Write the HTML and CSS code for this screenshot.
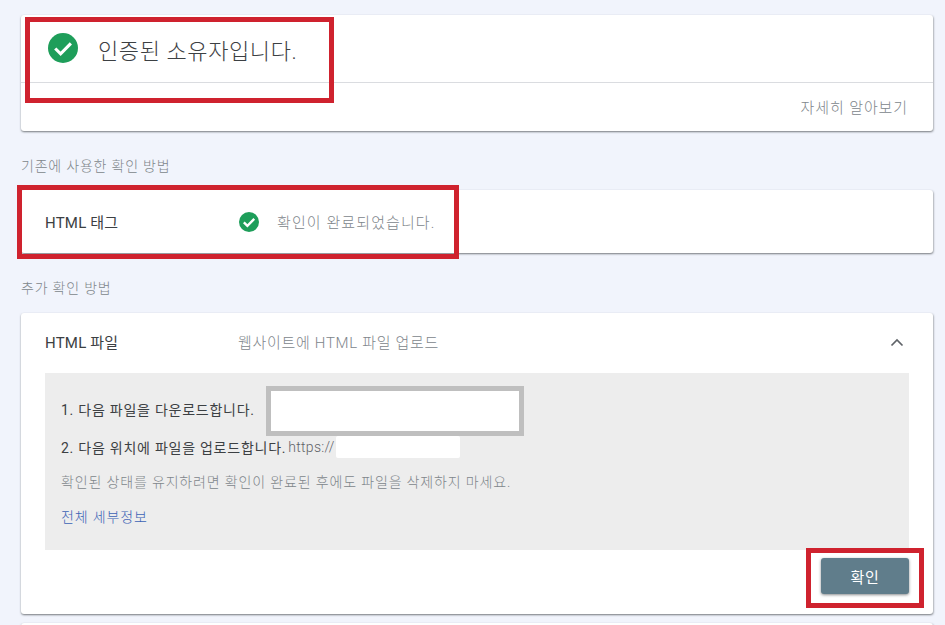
FILE: index.html
```html
<!DOCTYPE html>
<html lang="ko">
<head>
<meta charset="utf-8">
<title>소유권 확인</title>
<link rel="stylesheet" href="styles.css">
</head>
<body>
<main class="page">
  <section class="card owner-card">
    <div class="owner-head">
      <svg class="check check-lg" viewBox="0 0 24 24" aria-hidden="true"><circle cx="12" cy="12" r="12" fill="#1e9e5a"/><path d="M5.8 12.4l4.3 4.3 8.2-8.4" fill="none" stroke="#fff" stroke-width="2.5"/></svg>
      <h1 class="owner-title">인증된 소유자입니다.</h1>
    </div>
    <div class="owner-foot"><a class="more">자세히 알아보기</a></div>
  </section>

  <h2 class="section-label label-first">기존에 사용한 확인 방법</h2>
  <section class="card method-row">
    <div class="method-name">HTML 태그</div>
    <div class="method-status">
      <svg class="check check-sm" viewBox="0 0 24 24" aria-hidden="true"><circle cx="12" cy="12" r="12" fill="#1e9e5a"/><path d="M5.8 12.4l4.3 4.3 8.2-8.4" fill="none" stroke="#fff" stroke-width="2.8"/></svg>
      <span class="muted">확인이 완료되었습니다.</span>
    </div>
  </section>

  <h2 class="section-label label-second">추가 확인 방법</h2>
  <section class="card file-card">
    <div class="file-head">
      <div class="method-name">HTML 파일</div>
      <div class="file-desc muted">웹사이트에 HTML 파일 업로드</div>
      <svg class="chevron" viewBox="0 0 14 9" aria-hidden="true"><path d="M1.5 7.5L7 2l5.5 5.5" fill="none" stroke="#5f6368" stroke-width="1.7"/></svg>
    </div>
    <div class="panel">
      <div class="step step-one"><span class="step-text">1. 다음 파일을 다운로드합니다.</span><span class="redact-box"></span></div>
      <div class="step step-two"><span class="step-text">2. 다음 위치에 파일을 업로드합니다.</span><span class="url">https://</span><span class="redact-blob"></span></div>
      <p class="note">확인된 상태를 유지하려면 확인이 완료된 후에도 파일을 삭제하지 마세요.</p>
      <a class="details">전체 세부정보</a>
    </div>
    <div class="actions"><button class="confirm" type="button">확인</button></div>
  </section>
  <div class="card next-card"></div>
</main>
<div class="mark mark-owner"></div>
<div class="mark mark-tag"></div>
<div class="mark mark-button"></div>
</body>
</html>
```
FILE: styles.css
```css
* { box-sizing: border-box; }
html, body { margin: 0; height: 100%; }
body {
  position: relative;
  overflow: hidden;
  background: #f1f4fc;
  font-family: Roboto, "Noto Sans CJK KR", sans-serif;
  color: #202124;
}
.page { width: 912px; margin-left: 21px; padding-top: 15px; }
.card {
  background: #fff;
  border-radius: 3px;
  box-shadow: 0 1px 2px rgba(60,64,67,.55), 1px 1px 2px rgba(60,64,67,.2);
}
.owner-card { height: 116px; }
.owner-head {
  display: flex;
  align-items: center;
  height: 68px;
  padding-left: 27px;
  border-bottom: 1px solid #dadce0;
}
.check { display: block; flex: none; }
.check-lg { width: 30px; height: 30px; margin-top: -1px; }
.owner-title {
  margin: 7px 0 0 20px;
  font-size: 22px;
  font-weight: 300;
  line-height: 28px;
  color: #3c4043;
  letter-spacing: .6px;
}
.owner-foot {
  display: flex;
  justify-content: flex-end;
  align-items: center;
  height: 48px;
  padding: 0 25px 2px 0;
}
.more { font-size: 15px; font-weight: 300; color: #80868b; letter-spacing: .9px; }
.section-label {
  margin: 0;
  font-size: 14px;
  font-weight: 300;
  line-height: 16px;
  color: #80868b;
  letter-spacing: .8px;
}
.label-first { padding-top: 27px; height: 59px; }
.label-second { padding-top: 27px; height: 60px; }
.method-row {
  display: flex;
  align-items: center;
  height: 63px;
  padding-left: 24px;
}
.method-name { width: 193px; flex: none; font-size: 15px; color: #3c4043; letter-spacing: .2px; }
.method-status { display: flex; align-items: center; margin-left: 1px; }
.check-sm { width: 20px; height: 20px; }
.muted { font-size: 15px; font-weight: 300; color: #80868b; letter-spacing: .7px; }
.method-status .muted { margin-left: 18px; letter-spacing: 1.1px; }
.file-card { height: 301px; padding: 0 24px; }
.file-head { display: flex; align-items: center; height: 56px; margin-bottom: 4px; }
.file-desc { flex: 1; }
.chevron { width: 14px; height: 9px; margin: 2px 5px 0 0; }
.panel {
  height: 177px;
  padding: 13px 16px 0;
  background: #ededed;
  font-size: 14px;
  color: #3c4043;
}
.step { display: flex; align-items: center; letter-spacing: .75px; }
.step-one { height: 50px; }
.step-one .step-text { margin-top: -5px; }
.redact-box {
  display: block;
  flex: none;
  width: 258px;
  height: 50px;
  margin-left: 11px;
  background: #fff;
  border: 5px solid #bfbfbf;
}
.step-two { height: 22px; }
.step-two .step-text { margin-top: -1px; }
.url { margin: -1px 0 0 2px; font-weight: 300; color: #5f6368; letter-spacing: .3px; }
.redact-blob { display: block; width: 124px; height: 22px; margin-left: 1px; background: #fff; border-radius: 2px; }
.note {
  margin: 14px 0 0;
  font-weight: 300;
  line-height: 20px;
  color: #80868b;
  letter-spacing: .85px;
}
.details { display: block; margin-top: 15px; line-height: 20px; font-weight: 300; color: #3b62b5; letter-spacing: .85px; }
.actions { display: flex; justify-content: flex-end; padding-top: 8px; }
.confirm {
  width: 88px;
  height: 36px;
  border: 0;
  border-radius: 3px;
  background: #607d8b;
  color: #fff;
  font: 400 15px Roboto, "Noto Sans CJK KR", sans-serif;
  letter-spacing: .7px;
  box-shadow: 0 1px 3px rgba(60,64,67,.6);
}
.next-card { height: 20px; margin-top: 9px; }
.mark { position: absolute; border: 5px solid #cf222e; }
.mark-owner { left: 25px; top: 17px; width: 309px; height: 86px; }
.mark-tag { left: 17px; top: 185px; width: 442px; height: 74px; }
.mark-button { left: 806px; top: 548px; width: 118px; height: 60px; }
```
